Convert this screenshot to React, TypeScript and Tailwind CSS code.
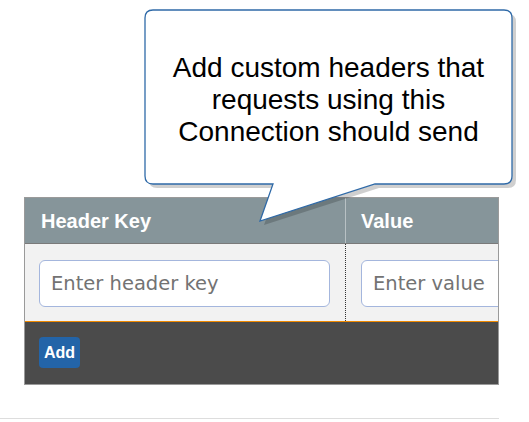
import React from "react";

function Callout() {
    return (
        <div className="absolute left-0 top-0 w-[529px] h-[230px] pointer-events-none">
            <svg width="529" height="230" className="absolute left-0 top-0">
                <path
                    d="M153,10 H504 Q512,10 512,18 V176 Q512,184 504,184 H375 L260,221 L273,184 H153 Q145,184 145,176 V18 Q145,10 153,10 Z"
                    transform="translate(4,4)"
                    fill="rgba(0,0,0,0.19)"
                />
                <path
                    d="M153,10 H504 Q512,10 512,18 V176 Q512,184 504,184 H375 L260,221 L273,184 H153 Q145,184 145,176 V18 Q145,10 153,10 Z"
                    fill="#ffffff"
                    stroke="#2f6aa8"
                    strokeWidth="1.3"
                />
            </svg>
            <div className="absolute left-[145px] top-[13px] w-[367px] h-[174px] flex items-center justify-center text-center text-black text-[28px] leading-[32px] font-['Liberation_Sans',Arial,sans-serif]">
                <div>
                    Add custom headers that
                    <br />
                    requests using this
                    <br />
                    Connection should send
                </div>
            </div>
        </div>
    );
}

function HeadersTable() {
    const inputClass =
        "w-[291px] h-[47px] bg-white rounded-md border border-[#a4b6dd] px-[11px] text-[19.5px] font-['DejaVu_Sans',Verdana,sans-serif] placeholder:text-[#737373] outline-none";
    return (
        <div className="w-[475px] border border-[#9a9a9a] overflow-hidden">
            <div className="flex h-[46px] bg-[#86959a] border-b border-[#7a7a7a]">
                <div className="w-[321px] shrink-0 flex items-center pl-4 border-r border-[#b8c1c4] text-white font-bold text-[20px] font-['Liberation_Sans',Arial,sans-serif]">
                    Header Key
                </div>
                <div className="w-[320px] shrink-0 flex items-center pl-[15px] text-white font-bold text-[20px] font-['Liberation_Sans',Arial,sans-serif]">
                    Value
                </div>
            </div>
            <div className="flex h-[78px] bg-[#f2f2f2] border-b border-[#f08a00]">
                <div className="w-[321px] shrink-0 pt-[16px] px-[14px] border-r border-dotted border-[#333]">
                    <input placeholder="Enter header key" className={inputClass} />
                </div>
                <div className="w-[320px] shrink-0 pt-[16px] pl-[15px]">
                    <input placeholder="Enter value" className={inputClass} />
                </div>
            </div>
            <div className="h-[62px] bg-[#4b4b4b] pt-[15px] pl-[14px]">
                <button className="w-[41px] h-[31px] rounded bg-[#2364a8] text-white font-bold text-[16px] font-['Liberation_Sans',Arial,sans-serif] flex items-center justify-center">
                    Add
                </button>
            </div>
        </div>
    );
}

export default function App() {
    return (
        <div className="relative w-[529px] h-[422px] bg-white overflow-hidden">
            <div className="pt-[197px] pl-[24px]">
                <HeadersTable />
            </div>
            <div className="mt-[33px] w-[499px] border-t border-[#dddddd]" />
            <Callout />
        </div>
    );
}
